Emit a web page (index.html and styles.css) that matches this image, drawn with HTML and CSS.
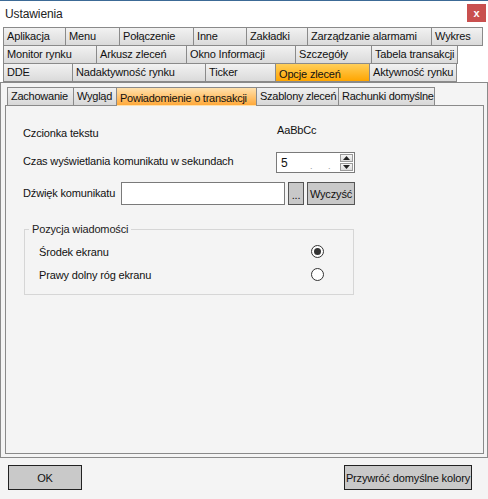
FILE: index.html
```html
<!DOCTYPE html>
<html>
<head>
<meta charset="utf-8">
<link rel="stylesheet" href="styles.css">
</head>
<body>
<div class="win">
  <div class="titlebar">
    <span class="title">Ustawienia</span>
    <div class="close">x</div>
  </div>
  <div class="tabs">
    <div class="row r1">
      <div class="tab">Aplikacja</div>
      <div class="tab">Menu</div>
      <div class="tab">Połączenie</div>
      <div class="tab">Inne</div>
      <div class="tab">Zakładki</div>
      <div class="tab">Zarządzanie alarmami</div>
      <div class="tab last">Wykres</div>
    </div>
    <div class="row r2">
      <div class="tab">Monitor rynku</div>
      <div class="tab">Arkusz zleceń</div>
      <div class="tab">Okno Informacji</div>
      <div class="tab">Szczegóły</div>
      <div class="tab last">Tabela transakcji</div>
    </div>
    <div class="row r3">
      <div class="tab">DDE</div>
      <div class="tab">Nadaktywność rynku</div>
      <div class="tab">Ticker</div>
      <div class="tab sel">Opcje zleceń</div>
      <div class="tab last">Aktywność rynku</div>
    </div>
  </div>
  <div class="outer">
    <div class="subtabs">
      <div class="stab">Zachowanie</div>
      <div class="stab">Wygląd</div>
      <div class="stab sel">Powiadomienie o transakcji</div>
      <div class="stab">Szablony zleceń</div>
      <div class="stab last">Rachunki domyślne</div>
    </div>
    <div class="inner">
      <div class="field row-font">
        <span class="label">Czcionka tekstu</span>
        <span class="sample">AaBbCc</span>
      </div>
      <div class="field row-time">
        <span class="label">Czas wyświetlania komunikatu w sekundach</span>
        <div class="spinner">
          <span class="val">5</span>
          <span class="dot d1">.</span>
          <span class="dot d2">.</span>
          <div class="spin">
            <div class="sbtn up"><svg width="7" height="4" viewBox="0 0 7 4"><path d="M0 4 L3.5 0 L7 4 Z" fill="#222"/></svg></div>
            <div class="sbtn down"><svg width="7" height="4" viewBox="0 0 7 4"><path d="M0 0 L3.5 4 L7 0 Z" fill="#222"/></svg></div>
          </div>
        </div>
      </div>
      <div class="field row-sound">
        <span class="label">Dźwięk komunikatu</span>
        <div class="input"></div>
        <div class="btn dots">...</div>
        <div class="btn clear">Wyczyść</div>
      </div>
      <div class="group">
        <span class="legend">Pozycja wiadomości</span>
        <div class="opt">
          <span>Środek ekranu</span>
          <span class="radio on"></span>
        </div>
        <div class="opt">
          <span>Prawy dolny róg ekranu</span>
          <span class="radio"></span>
        </div>
      </div>
    </div>
  </div>
  <div class="footer">
    <div class="fbtn ok">OK</div>
    <div class="fbtn reset">Przywróć domyślne kolory</div>
  </div>
</div>
</body>
</html>
```

FILE: styles.css
```css
* { box-sizing: border-box; }
html, body {
  margin: 0;
  padding: 0;
  width: 488px;
  height: 499px;
  overflow: hidden;
}
body {
  font-family: "Liberation Sans", Arial, sans-serif;
  font-size: 11px;
  letter-spacing: -0.15px;
  color: #111;
  background: #f4f4f4;
}
.win {
  width: 488px;
  height: 499px;
  display: flex;
  flex-direction: column;
  background: #f4f4f4;
}
.titlebar {
  height: 27px;
  background: #ffffff;
  border-top: 1px solid #3c6a96;
  display: flex;
  align-items: center;
  justify-content: space-between;
  padding-left: 5px;
  padding-right: 2px;
}
.title {
  font-size: 12px;
  letter-spacing: -0.1px;
  color: #222;
}
.close {
  width: 19px;
  height: 18px;
  background: #c9504f;
  color: #fff;
  font-weight: bold;
  font-size: 11px;
  display: flex;
  align-items: center;
  justify-content: center;
  margin-top: -2px;
}
.tabs {
  background: #ffffff;
  padding-left: 3px;
  display: flex;
  flex-direction: column;
}
.row {
  display: grid;
  height: 19px;
  margin-top: -1px;
}
.row.r1 { margin-top: 0; grid-template-columns: 62px 54px 74px 53px 61px 124px 52px; }
.row.r2 { grid-template-columns: 93px 90px 109px 76px 87px; }
.row.r3 { grid-template-columns: 69px 133px 70px 94px 88px; }
.tab {
  border-top: 1px solid #8a8a8a;
  border-bottom: 1px solid #8a8a8a;
  border-left: 1px solid #8a8a8a;
  background: linear-gradient(#f2f2f2, #dadada);
  padding-left: 3px;
  padding-top: 1px;
  line-height: 15px;
  white-space: nowrap;
  overflow: hidden;
}
.tab.last { border-right: 1px solid #8a8a8a; }
.tab.sel {
  background: linear-gradient(#ffcf5a, #ffa500);
  padding-top: 3px;
}
.outer {
  height: 376px;
  border: 1px solid #8a8a8a;
  background: #f4f4f4;
  padding: 4px 3px 3px 4px;
  display: flex;
  flex-direction: column;
}
.subtabs {
  display: grid;
  grid-template-columns: 66px 43px 140px 82px 97px;
  height: 19px;
  margin-left: 2px;
  position: relative;
  z-index: 1;
}
.stab {
  border-top: 1px solid #8a8a8a;
  border-left: 1px solid #8a8a8a;
  border-bottom: 1px solid #8a8a8a;
  background: linear-gradient(#f0f0f0, #d8d8d8);
  padding-left: 3px;
  padding-top: 1px;
  line-height: 15px;
  letter-spacing: -0.25px;
  white-space: nowrap;
  overflow: hidden;
}
.stab.last { border-right: 1px solid #8a8a8a; }
.stab.sel {
  background: linear-gradient(#ffe1ad, #ffa93a);
  border-bottom-color: transparent;
  padding-top: 3px;
}
.inner {
  flex: 1;
  border: 1px solid #8a8a8a;
  margin-top: -1px;
  background: #f4f4f4;
  padding: 15px 0 0 17px;
  display: flex;
  flex-direction: column;
}
.field {
  display: flex;
  align-items: center;
}
.row-font {
  height: 20px;
}
.row-font .label { width: 254px; margin-top: 4px; }
.row-font .sample { margin-top: -2px; }
.row-time {
  margin-top: 11px;
  height: 21px;
}
.row-time .label { width: 253px; margin-top: -4px; }
.spinner {
  width: 79px;
  height: 21px;
  border: 1px solid #7a7a7a;
  background: #fff;
  position: relative;
  display: flex;
  align-items: center;
  padding-left: 4px;
}
.spinner .val { font-size: 12px; }
.spinner .dot {
  position: absolute;
  bottom: 1px;
  color: #999;
  font-size: 9px;
  line-height: 9px;
}
.spinner .d1 { left: 33px; }
.spinner .d2 { left: 51px; }
.spin {
  position: absolute;
  right: 1px;
  top: 1px;
  display: flex;
  flex-direction: column;
  gap: 1px;
}
.sbtn {
  width: 13px;
  height: 8px;
  background: linear-gradient(#f6f6f6, #dcdcdc);
  border: 1px solid #9a9a9a;
  display: flex;
  align-items: center;
  justify-content: center;
}
.row-sound {
  margin-top: 9px;
  height: 23px;
}
.row-sound .label { width: 98px; margin-top: -2px; white-space: nowrap; }
.input {
  width: 164px;
  height: 23px;
  background: #fff;
  border: 1px solid #7a7a7a;
}
.btn {
  height: 23px;
  background: #c8c8c8;
  border: 1px solid #555;
  display: flex;
  align-items: center;
  justify-content: center;
}
.btn.dots {
  width: 16px;
  margin-left: 3px;
  padding-top: 3px;
}
.btn.clear {
  width: 48px;
  margin-left: 3px;
}
.group {
  margin: 24px 0 0 1px;
  width: 330px;
  height: 66px;
  border: 1px solid #d6d6d6;
  padding: 0 29px 0 14px;
  display: flex;
  flex-direction: column;
}
.group .legend {
  align-self: flex-start;
  margin: -8px 0 0 -10px;
  padding: 0 3px;
  background: #f4f4f4;
  color: #222;
  line-height: 14px;
}
.opt {
  display: flex;
  align-items: center;
  justify-content: space-between;
  height: 23px;
}
.opt:first-of-type { margin-top: 4px; }
.radio {
  width: 13px;
  height: 13px;
  border: 1px solid #333;
  border-radius: 50%;
  background: #fff;
  position: relative;
}
.radio.on::after {
  content: "";
  position: absolute;
  left: 2px;
  top: 2px;
  width: 7px;
  height: 7px;
  border-radius: 50%;
  background: #333;
}
.footer {
  flex: 1;
  display: flex;
  justify-content: space-between;
  align-items: flex-start;
  padding: 7px 16px 0 8px;
}
.fbtn {
  height: 25px;
  background: #c9c9c9;
  border: 1px solid #222;
  display: flex;
  align-items: center;
  justify-content: center;
  white-space: nowrap;
  font-size: 11px;
}
.fbtn.ok { width: 74px; }
.fbtn.reset { width: 128px; }
```
